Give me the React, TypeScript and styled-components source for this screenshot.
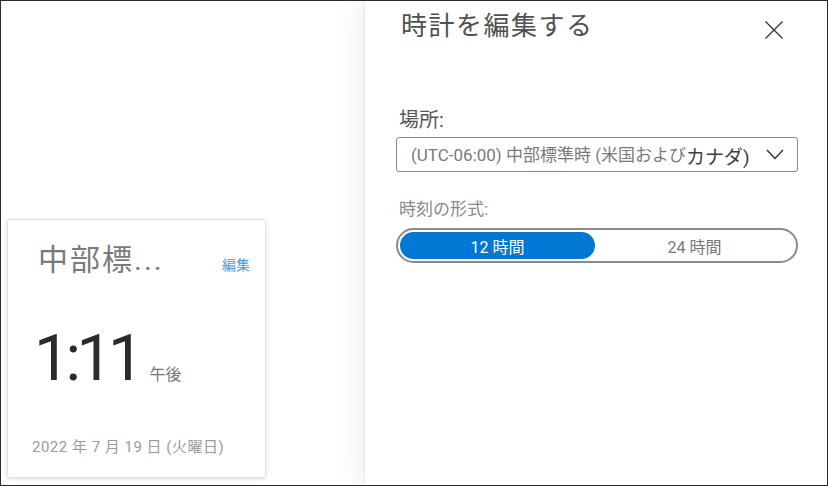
import React from 'react';
import styled, { createGlobalStyle } from 'styled-components';

const GlobalStyle = createGlobalStyle`
  body {
    margin: 0;
    background: #ffffff;
    font-family: Roboto, "Noto Sans CJK JP", sans-serif;
  }
`;

const Frame = styled.div`
  width: 828px;
  height: 486px;
  box-sizing: border-box;
  border: 1px solid #2b2b2b;
  display: flex;
  background: #ffffff;
  overflow: hidden;
`;

const Canvas = styled.div`
  flex: 1;
  display: flex;
  align-items: flex-end;
  padding: 0 0 7px 6px;
`;

const ClockCard = styled.div`
  width: 259px;
  height: 259px;
  box-sizing: border-box;
  border: 1px solid #e2e2e2;
  border-radius: 3px;
  box-shadow: 0 1px 4px rgba(0, 0, 0, 0.14);
  padding: 21px 15px 20px 30px;
  display: flex;
  flex-direction: column;
`;

const CardHeader = styled.div`
  display: flex;
  justify-content: space-between;
  align-items: baseline;
`;

const CityName = styled.div`
  font-size: 30px;
  line-height: 38px;
  letter-spacing: 2px;
  color: #7a7a7a;
`;

const EditLink = styled.a`
  font-size: 14px;
  color: #4f9bd8;
  cursor: pointer;
`;

const TimeRow = styled.div`
  display: flex;
  align-items: baseline;
  gap: 10px;
  margin-top: 47px;
`;

const TimeValue = styled.div`
  font-size: 64px;
  line-height: 66px;
  font-weight: 400;
  letter-spacing: -4.5px;
  color: #2b2b2b;
  margin-left: -4px;
`;

const Period = styled.div`
  font-size: 16px;
  color: #777777;
`;

const DateText = styled.div`
  margin: auto 0 0 -6px;
  font-size: 15px;
  line-height: 20px;
  letter-spacing: 0.5px;
  color: #9b9b9b;
`;

const Panel = styled.aside`
  width: 462px;
  flex-shrink: 0;
  box-sizing: border-box;
  padding: 7px 29px 0 31px;
  background: #ffffff;
  box-shadow: -1px 0 2px rgba(0, 0, 0, 0.06), -6px 0 24px rgba(0, 0, 0, 0.07);
  display: flex;
  flex-direction: column;
`;

const PanelHeader = styled.div`
  display: flex;
  justify-content: space-between;
  align-items: flex-start;
`;

const PanelTitle = styled.h1`
  margin: 0;
  padding-left: 5px;
  font-size: 26px;
  line-height: 36px;
  font-weight: 400;
  letter-spacing: 1.5px;
  color: #505050;
`;

const CloseButton = styled.button`
  border: none;
  background: none;
  padding: 0;
  margin: 13px 15px 0 0;
  width: 18px;
  height: 18px;
  display: flex;
  cursor: pointer;
`;

const FieldLabel = styled.label<{ $size: number; $color: string; $top: number }>`
  display: block;
  margin-top: ${({ $top }) => $top}px;
  padding-left: 3px;
  font-size: ${({ $size }) => $size}px;
  line-height: ${({ $size }) => $size + 6}px;
  color: ${({ $color }) => $color};
`;

const Select = styled.div`
  margin-top: 4px;
  height: 35px;
  box-sizing: border-box;
  border: 1px solid #8a8a8a;
  border-radius: 3px;
  display: flex;
  align-items: center;
  justify-content: space-between;
  padding: 0 13px 0 14px;
  white-space: nowrap;
  overflow: hidden;
`;

const SelectText = styled.span`
  font-size: 17px;
  color: #7a7a7a;
`;

const FallbackGlyphs = styled.span`
  font-size: 19px;
  color: #3e3e3e;
  vertical-align: -3px;
`;

const Toggle = styled.div`
  margin-top: 7px;
  height: 35px;
  box-sizing: border-box;
  border: 2px solid #8a8a8a;
  border-radius: 18px;
  padding: 2px;
  display: flex;
`;

const ToggleOption = styled.div<{ $active?: boolean }>`
  border-radius: 14px;
  display: flex;
  align-items: center;
  justify-content: center;
  font-size: 16px;
  color: ${({ $active }) => ($active ? '#ffffff' : '#777777')};
  background: ${({ $active }) => ($active ? '#0078d4' : 'transparent')};
  flex: ${({ $active }) => ($active ? '0 0 195px' : '1')};
`;

const App: React.FC = () => (
  <>
    <GlobalStyle />
    <Frame>
      <Canvas>
        <ClockCard>
          <CardHeader>
            <CityName>中部標...</CityName>
            <EditLink>編集</EditLink>
          </CardHeader>
          <TimeRow>
            <TimeValue>1:11</TimeValue>
            <Period>午後</Period>
          </TimeRow>
          <DateText>2022 年 7 月 19 日 (火曜日)</DateText>
        </ClockCard>
      </Canvas>
      <Panel>
        <PanelHeader>
          <PanelTitle>時計を編集する</PanelTitle>
          <CloseButton aria-label="閉じる">
            <svg width="18" height="18" viewBox="0 0 18 18">
              <path d="M0.5 0.5 L17.5 17.5 M17.5 0.5 L0.5 17.5" stroke="#333" strokeWidth="1.3" fill="none" />
            </svg>
          </CloseButton>
        </PanelHeader>
        <FieldLabel $size={20} $color="#555555" $top={63}>場所:</FieldLabel>
        <Select>
          <SelectText>
            (UTC-06:00) 中部標準時 (米国および<FallbackGlyphs>カナダ)</FallbackGlyphs>
          </SelectText>
          <svg width="18" height="11" viewBox="0 0 18 11">
            <path d="M1 1 L9 9.5 L17 1" stroke="#333" strokeWidth="1.4" fill="none" />
          </svg>
        </Select>
        <FieldLabel $size={17} $color="#8a8a8a" $top={26}>時刻の形式:</FieldLabel>
        <Toggle>
          <ToggleOption $active>12 時間</ToggleOption>
          <ToggleOption>24 時間</ToggleOption>
        </Toggle>
      </Panel>
    </Frame>
  </>
);

export default App;
